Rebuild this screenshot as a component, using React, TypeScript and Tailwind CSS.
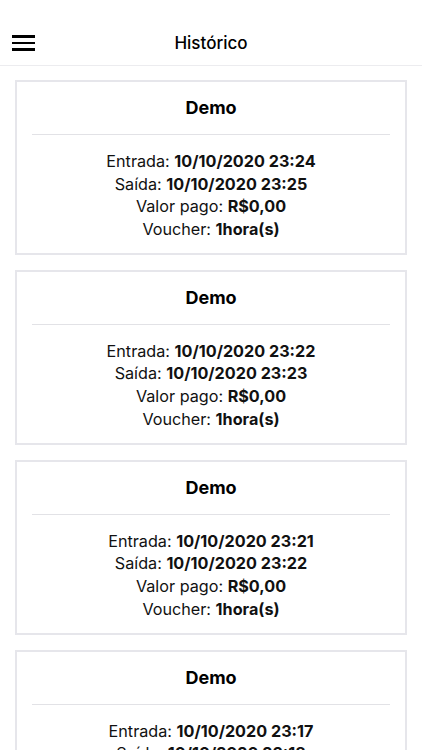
import React from "react";

const items = [
  { entrada: "10/10/2020 23:24", saida: "10/10/2020 23:25" },
  { entrada: "10/10/2020 23:22", saida: "10/10/2020 23:23" },
  { entrada: "10/10/2020 23:21", saida: "10/10/2020 23:22" },
  { entrada: "10/10/2020 23:17", saida: "10/10/2020 23:18" },
];

function Card({ entrada, saida }: { entrada: string; saida: string }) {
  return (
    <div className="border-2 border-[#e6e6eb] bg-white">
      <h2 className="pt-[14px] text-center text-[18px] leading-6 font-bold text-black">
        Demo
      </h2>
      <div className="mx-[15px] mt-[14px] h-px bg-[#e2e2e6]"></div>
      <div className="mt-[15px] pb-[13px] text-center text-[16.2px] leading-[22.6px] text-[#111]">
        <p>
          Entrada: <span className="font-bold">{entrada}</span>
        </p>
        <p>
          Saída: <span className="font-bold">{saida}</span>
        </p>
        <p>
          Valor pago: <span className="font-bold">R$0,00</span>
        </p>
        <p>
          Voucher: <span className="font-bold">1hora(s)</span>
        </p>
      </div>
    </div>
  );
}

export default function App() {
  return (
    <div className="h-[750px] w-[422px] overflow-hidden bg-white font-['Inter',sans-serif]">
      {/* header */}
      <div className="relative flex h-[66px] items-end justify-center border-b border-[#ececef] pb-[10px]">
        <button className="absolute left-[12px] top-[35px] flex w-[23px] flex-col gap-[4px]">
          <span className="block h-[2.5px] w-full bg-black"></span>
          <span className="block h-[2.5px] w-full bg-black"></span>
          <span className="block h-[2.5px] w-full bg-black"></span>
        </button>
        <h1 className="text-[17px] leading-6 font-medium text-black">Histórico</h1>
      </div>

      <div className="flex flex-col gap-[14.5px] px-[15px] pt-[14px]">
        {items.map((it, i) => (
          <Card key={i} entrada={it.entrada} saida={it.saida} />
        ))}
      </div>
    </div>
  );
}
